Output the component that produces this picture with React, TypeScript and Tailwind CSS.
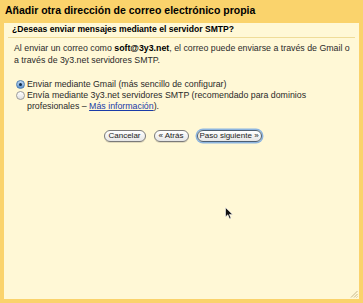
import React from "react";

export default function App() {
  const font = { fontFamily: '"Liberation Sans", Arial, sans-serif' };
  return (
    <div
      className="relative w-[363px] h-[303px] bg-[#fad36c] flex flex-col overflow-hidden text-[#2a2a2a]"
      style={font}
    >
      <div className="h-[23px] shrink-0 pl-[5px] pt-[4px] text-[10.5px] font-bold leading-[13px] text-black">
        Añadir otra dirección de correo electrónico propia
      </div>
      <div className="relative flex-1 mx-[4px] mb-[4px] bg-[#fff8d6] flex flex-col">
        <div className="mx-[4px] h-[15px] border-b border-[#efdc98] pl-[4px] pt-0 text-[8.6px] font-bold leading-[12px] text-black">
          ¿Deseas enviar mensajes mediante el servidor SMTP?
        </div>
        <p className="mt-[4px] pl-[10px] text-[8.8px] leading-[12px]">
          Al enviar un correo como <b className="text-black">soft@3y3.net</b>, el correo puede enviarse a través de Gmail o
          <br />a través de 3y3.net servidores SMTP.
        </p>
        <div className="mt-[13px] pl-[12px] flex flex-col text-[8.8px] leading-[11px]">
          <label className="flex items-start gap-[2px]">
            <span className="mt-[1px] w-[9px] h-[9px] shrink-0 rounded-full border border-[#4f7fb3] bg-gradient-to-b from-[#c4dcf5] to-[#5d93cf] flex items-center justify-center">
              <span className="w-[3px] h-[3px] rounded-full bg-[#102a45]" />
            </span>
            <span>Enviar mediante Gmail (más sencillo de configurar)</span>
          </label>
          <label className="flex items-start gap-[2px]">
            <span className="mt-[1px] w-[9px] h-[9px] shrink-0 rounded-full border border-[#9a9a9a] bg-gradient-to-b from-[#ffffff] to-[#e0e0e0]" />
            <span>
              Envía mediante 3y3.net servidores SMTP (recomendado para dominios
              <br />
              profesionales – <span className="text-[#1a3ca8] underline">Más información</span>).
            </span>
          </label>
        </div>
        <div className="mt-[18px] flex justify-center gap-[8px] pl-[2px] text-[8px] leading-[10px]">
          <button className="w-[42px] h-[12px] rounded-full border border-[#7a7a7a] bg-gradient-to-b from-white to-[#e6e6e6] text-[#222] shadow-[0_1px_0_rgba(0,0,0,0.12)]">
            Cancelar
          </button>
          <button className="w-[35px] h-[12px] rounded-full border border-[#7a7a7a] bg-gradient-to-b from-white to-[#e6e6e6] text-[#222] shadow-[0_1px_0_rgba(0,0,0,0.12)]">
            « Atrás
          </button>
          <button className="w-[65px] h-[12px] rounded-full border border-[#4d5f73] bg-gradient-to-b from-white to-[#e6e6e6] text-[#222] ring-[1.5px] ring-[#8db5e0]">
            Paso siguiente »
          </button>
        </div>
        <svg
          className="absolute left-[221px] top-[184px]"
          width="9"
          height="13"
          viewBox="0 0 9 13"
        >
          <path d="M0.5 0.5 L0.5 10 L2.8 7.8 L4.5 11.8 L6 11.2 L4.4 7.4 L7.6 7.4 Z" fill="#111" stroke="#fff" strokeWidth="0.6" />
        </svg>
        <svg className="absolute right-[1px] bottom-[1px]" width="8" height="8" viewBox="0 0 8 8">
          <path d="M7.5 1 L1 7.5 M7.5 4 L4 7.5 M7.5 6.5 L6.5 7.5" stroke="#b9a77a" strokeWidth="0.8" />
        </svg>
      </div>
    </div>
  );
}
